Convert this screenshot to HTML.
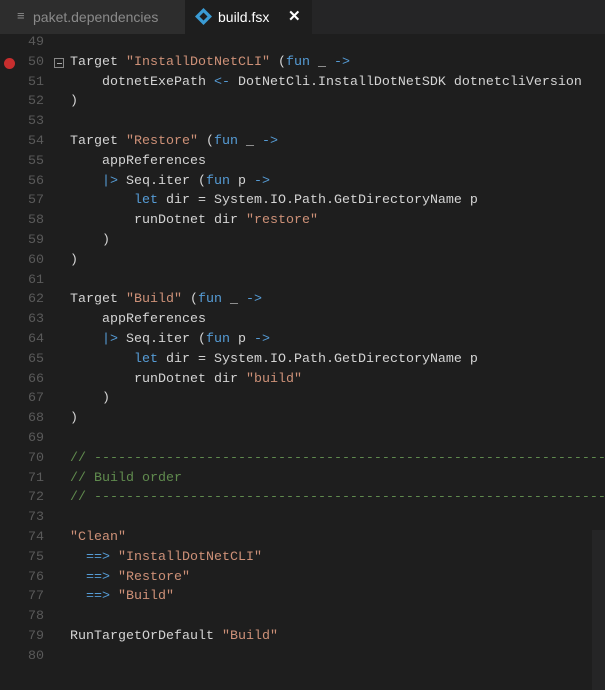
<!DOCTYPE html>
<html><head><style>
body{margin:0;width:605px;height:690px;background:#1e1e1e;overflow:hidden;position:relative;font-family:"Liberation Mono",monospace;}
.tabs{position:absolute;left:0;top:0;width:605px;height:34px;background:#252526;}
.tab1{position:absolute;left:0;top:0;width:185px;height:34px;background:#2d2d2d;color:#8a8a8a;font:14px "Liberation Sans",sans-serif;}
.tab2{position:absolute;left:185px;top:0;width:127px;height:34px;background:#1e1e1e;color:#fff;font:14px "Liberation Sans",sans-serif;}
.code{position:absolute;left:0;top:33px;width:605px;}
.l{height:19.8px;line-height:19.8px;font-size:13.33px;white-space:pre;position:relative;color:#d4d4d4;overflow:hidden;}
.n{position:absolute;left:0;width:44px;text-align:right;color:#5a5a5a;}
.t{position:absolute;left:70px;}
.k{color:#569cd6}.s{color:#ce9178}.c{color:#608b4e}
</style></head><body>
<div class="tabs">
<div class="tab1"><span style="position:absolute;left:17px;top:8px;font-size:13px">&#8801;</span><span style="position:absolute;left:33px;top:9px">paket.dependencies</span></div>
<div class="tab2"><svg style="position:absolute;left:9px;top:7px" width="19" height="19" viewBox="0 0 19 19"><path d="M9.5 1 L18 9.5 L9.5 18 L1 9.5Z" fill="#3a9bd4"/><path d="M9.5 5.5 L13.5 9.5 L9.5 13.5 L5.5 9.5Z" fill="#1e1e1e"/></svg><span style="position:absolute;left:33px;top:9px">build.fsx</span><span style="position:absolute;left:103px;top:7px;font-weight:bold;font-size:15px">&#10005;</span></div>
</div>
<div style="position:absolute;left:592px;top:530px;width:13px;height:160px;background:#252526"></div>
<div style="position:absolute;left:4px;top:58px;width:11px;height:11px;border-radius:50%;background:#c72e2e"></div>
<div style="position:absolute;left:54px;top:58px;width:8px;height:8px;border:1px solid #888;"><div style="position:absolute;left:2px;top:4px;width:5px;height:1px;background:#aaa"></div></div>
<div class="code">
<div class="l"><span class="n">49</span></div>
<div class="l"><span class="n">50</span><span class="t">Target <span class="s">"InstallDotNetCLI"</span> (<span class="k">fun</span> _ <span class="k">-&gt;</span></span></div>
<div class="l"><span class="n">51</span><span class="t">    dotnetExePath <span class="k">&lt;-</span> DotNetCli.InstallDotNetSDK dotnetcliVersion</span></div>
<div class="l"><span class="n">52</span><span class="t">)</span></div>
<div class="l"><span class="n">53</span></div>
<div class="l"><span class="n">54</span><span class="t">Target <span class="s">"Restore"</span> (<span class="k">fun</span> _ <span class="k">-&gt;</span></span></div>
<div class="l"><span class="n">55</span><span class="t">    appReferences</span></div>
<div class="l"><span class="n">56</span><span class="t">    <span class="k">|&gt;</span> Seq.iter (<span class="k">fun</span> p <span class="k">-&gt;</span></span></div>
<div class="l"><span class="n">57</span><span class="t">        <span class="k">let</span> dir = System.IO.Path.GetDirectoryName p</span></div>
<div class="l"><span class="n">58</span><span class="t">        runDotnet dir <span class="s">"restore"</span></span></div>
<div class="l"><span class="n">59</span><span class="t">    )</span></div>
<div class="l"><span class="n">60</span><span class="t">)</span></div>
<div class="l"><span class="n">61</span></div>
<div class="l"><span class="n">62</span><span class="t">Target <span class="s">"Build"</span> (<span class="k">fun</span> _ <span class="k">-&gt;</span></span></div>
<div class="l"><span class="n">63</span><span class="t">    appReferences</span></div>
<div class="l"><span class="n">64</span><span class="t">    <span class="k">|&gt;</span> Seq.iter (<span class="k">fun</span> p <span class="k">-&gt;</span></span></div>
<div class="l"><span class="n">65</span><span class="t">        <span class="k">let</span> dir = System.IO.Path.GetDirectoryName p</span></div>
<div class="l"><span class="n">66</span><span class="t">        runDotnet dir <span class="s">"build"</span></span></div>
<div class="l"><span class="n">67</span><span class="t">    )</span></div>
<div class="l"><span class="n">68</span><span class="t">)</span></div>
<div class="l"><span class="n">69</span></div>
<div class="l"><span class="n">70</span><span class="t c">// ---------------------------------------------------------------------</span></div>
<div class="l"><span class="n">71</span><span class="t c">// Build order</span></div>
<div class="l"><span class="n">72</span><span class="t c">// ---------------------------------------------------------------------</span></div>
<div class="l"><span class="n">73</span></div>
<div class="l"><span class="n">74</span><span class="t s">"Clean"</span></div>
<div class="l"><span class="n">75</span><span class="t">  <span class="k">==&gt;</span> <span class="s">"InstallDotNetCLI"</span></span></div>
<div class="l"><span class="n">76</span><span class="t">  <span class="k">==&gt;</span> <span class="s">"Restore"</span></span></div>
<div class="l"><span class="n">77</span><span class="t">  <span class="k">==&gt;</span> <span class="s">"Build"</span></span></div>
<div class="l"><span class="n">78</span></div>
<div class="l"><span class="n">79</span><span class="t">RunTargetOrDefault <span class="s">"Build"</span></span></div>
<div class="l"><span class="n">80</span></div>
</div>
</body></html>
